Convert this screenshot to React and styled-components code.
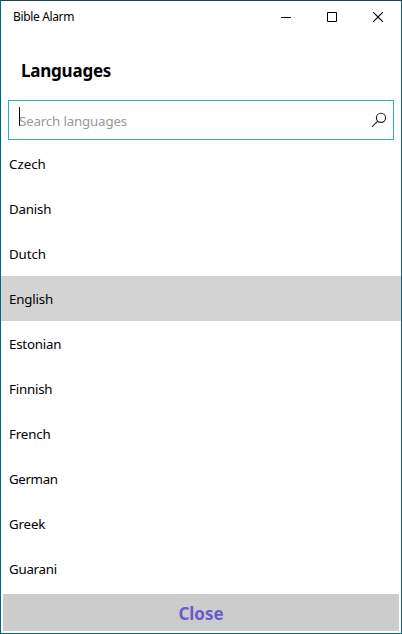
import React from "react";
import styled, { createGlobalStyle } from "styled-components";

const GlobalStyle = createGlobalStyle`
  *, *::before, *::after { box-sizing: border-box; }
  body { margin: 0; background: #fff; overflow: hidden; }
`;

const Window = styled.div`
  width: 402px;
  height: 634px;
  display: flex;
  flex-direction: column;
  background: #fff;
  color: #000;
  border: 1px solid #00677c;
  border-top-color: #194650;
  border-right-color: #125e6c;
  font-family: "Noto Sans", "Open Sans", sans-serif;
`;

const TitleBar = styled.header`
  height: 32px;
  flex: none;
  display: flex;
  justify-content: space-between;
  padding-left: 12px;
`;

const AppName = styled.span`
  font-size: 12px;
  line-height: 32px;
  letter-spacing: -0.35px;
`;

const WindowControls = styled.div`
  display: flex;
`;

const ControlButton = styled.button`
  width: 46px;
  height: 32px;
  display: flex;
  align-items: center;
  justify-content: center;
  padding: 0;
  border: 0;
  background: transparent;
`;

const Heading = styled.h1`
  height: 67px;
  flex: none;
  margin: 0;
  padding: 19px 0 0 20px;
  font-size: 17px;
  line-height: 38px;
  font-weight: 700;
  letter-spacing: -0.22px;
`;

const SearchBox = styled.label`
  width: 386px;
  height: 40px;
  flex: none;
  display: flex;
  align-items: center;
  margin: 0 0 1px 7px;
  padding: 0 6px 0 10px;
  border: 1px solid #2aaec6;
`;

const Caret = styled.span`
  width: 1px;
  height: 19px;
  margin: -7px -1px 0 0;
  background: #000;
`;

const Placeholder = styled.span`
  flex: 1;
  color: #999;
  font-size: 13.3px;
  line-height: 38px;
  padding-top: 2px;
  letter-spacing: -0.16px;
`;

const LanguageList = styled.ul`
  flex: none;
  margin: 0;
  padding: 0;
  list-style: none;
`;

const LanguageRow = styled.li`
  height: 45px;
  padding: 1px 0 0 8px;
  font-size: 13.3px;
  line-height: 45px;
  letter-spacing: ${({ $tracking }) => $tracking}px;
  background: ${({ $selected }) => ($selected ? "#d3d3d3" : "transparent")};
`;

const CloseButton = styled.button`
  height: 37px;
  flex: none;
  margin: 3px 2px 0;
  padding: 2px 0 0;
  border: 0;
  background: #ccc;
  color: #6a5acd;
  font: 700 17px/35px "Noto Sans", "Open Sans", sans-serif;
  letter-spacing: -0.05px;
`;

const languages = [
  { name: "Czech", tracking: 0 },
  { name: "Danish", tracking: -0.2 },
  { name: "Dutch", tracking: -0.1 },
  { name: "English", tracking: -0.18, selected: true },
  { name: "Estonian", tracking: -0.2 },
  { name: "Finnish", tracking: -0.2 },
  { name: "French", tracking: -0.15 },
  { name: "German", tracking: -0.35 },
  { name: "Greek", tracking: -0.15 },
  { name: "Guarani", tracking: -0.25 },
];

const MinimizeIcon = () => (
  <svg width="10" height="10" fill="none" stroke="#000">
    <path d="M0 5.5H10" />
  </svg>
);

const MaximizeIcon = () => (
  <svg width="10" height="10" fill="none" stroke="#000">
    <path d="M.5.5h9v9h-9z" />
  </svg>
);

const CloseIcon = () => (
  <svg width="10" height="10" fill="none" stroke="#000" strokeWidth="1.1">
    <path d="M0 0 10 10M10 0 0 10" />
  </svg>
);

const SearchIcon = () => (
  <svg width="16" height="16" fill="none" stroke="#222" strokeWidth="1.15">
    <circle cx="10" cy="5.8" r="4.6" />
    <path d="M6.7 9.1 1 14.8" />
  </svg>
);

export default function App() {
  return (
    <>
      <GlobalStyle />
      <Window>
        <TitleBar>
          <AppName>Bible Alarm</AppName>
          <WindowControls>
            <ControlButton aria-label="Minimize"><MinimizeIcon /></ControlButton>
            <ControlButton aria-label="Maximize"><MaximizeIcon /></ControlButton>
            <ControlButton aria-label="Close window"><CloseIcon /></ControlButton>
          </WindowControls>
        </TitleBar>
        <Heading>Languages</Heading>
        <SearchBox>
          <Caret />
          <Placeholder>Search languages</Placeholder>
          <SearchIcon />
        </SearchBox>
        <LanguageList>
          {languages.map(({ name, tracking, selected }) => (
            <LanguageRow key={name} $tracking={tracking} $selected={selected}>
              {name}
            </LanguageRow>
          ))}
        </LanguageList>
        <CloseButton>Close</CloseButton>
      </Window>
    </>
  );
}
